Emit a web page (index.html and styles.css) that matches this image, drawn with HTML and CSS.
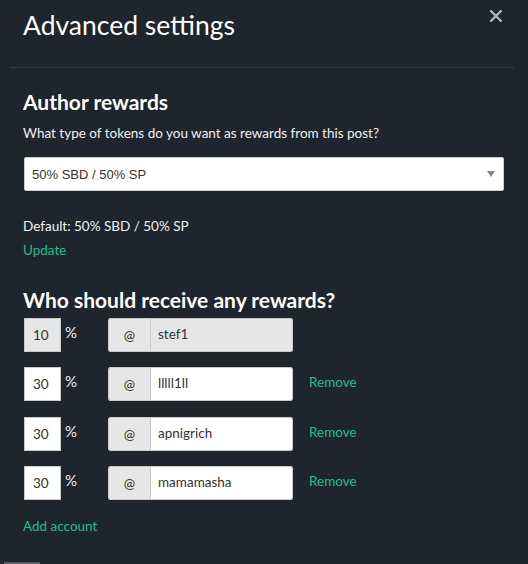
FILE: index.html
```html
<!DOCTYPE html>
<html>
<head>
<meta charset="utf-8">
<link rel="stylesheet" href="styles.css">
</head>
<body>
<div class="modal">
  <div class="header">
    <h1 class="title">Advanced settings</h1>
    <svg class="close" width="12" height="12" viewBox="0 0 12 12"><path d="M1 1 L11 11 M11 1 L1 11" stroke="#a9b1b9" stroke-width="2.4" stroke-linecap="square"/></svg>
  </div>
  <div class="divider"></div>
  <div class="content">
    <h2 class="section-title">Author rewards</h2>
    <p class="desc">What type of tokens do you want as rewards from this post?</p>
    <div class="select">
      <span class="select-text">50% SBD / 50% SP</span>
      <span class="arrow"></span>
    </div>
    <p class="default">Default: 50% SBD / 50% SP</p>
    <a class="link update">Update</a>
    <h2 class="section-title second">Who should receive any rewards?</h2>
    <div class="rows">
      <div class="row">
        <div class="pct-cell"><span class="pct-input disabled">10</span><span class="pct-sign">%</span></div>
        <div class="account"><span class="at">@</span><span class="name disabled">stef1</span></div>
      </div>
      <div class="row">
        <div class="pct-cell"><span class="pct-input">30</span><span class="pct-sign">%</span></div>
        <div class="account"><span class="at">@</span><span class="name">lllll1ll</span></div>
        <a class="link remove">Remove</a>
      </div>
      <div class="row">
        <div class="pct-cell"><span class="pct-input">30</span><span class="pct-sign">%</span></div>
        <div class="account"><span class="at">@</span><span class="name">apnigrich</span></div>
        <a class="link remove">Remove</a>
      </div>
      <div class="row">
        <div class="pct-cell"><span class="pct-input">30</span><span class="pct-sign">%</span></div>
        <div class="account"><span class="at">@</span><span class="name">mamamasha</span></div>
        <a class="link remove">Remove</a>
      </div>
    </div>
    <a class="link add">Add account</a>
  </div>
  <div class="scrollbar"></div>
</div>
</body>
</html>
```
FILE: styles.css
```css
html, body {
  margin: 0;
  padding: 0;
  background: #1e252d;
}
body {
  width: 528px;
  height: 564px;
  overflow: hidden;
  font-family: Lato, "Noto Sans", sans-serif;
  color: #f0f0f0;
}
.modal {
  position: relative;
  height: 564px;
}
.header {
  position: relative;
  height: 67px;
}
.title {
  margin: 0;
  padding: 7px 0 0 23px;
  font-size: 26.5px;
  font-weight: 400;
  line-height: 36px;
  color: #ffffff;
}
.close {
  position: absolute;
  top: 10px;
  right: 26px;
}
.divider {
  height: 1px;
  margin: 0 14px 0 10px;
  background: #323d48;
}
.content {
  padding: 0 24px 0 23px;
}
.section-title {
  margin: 0;
  font-size: 21px;
  font-weight: 700;
  line-height: 26px;
  color: #ffffff;
  padding-top: 21px;
}
.section-title.second {
  padding-top: 28px;
}
.desc {
  margin: 9px 0 0;
  font-size: 13.5px;
  line-height: 18px;
}
.select {
  margin: 15px 0 0 1px;
  height: 32px;
  background: #fff;
  border: 1px solid #cfcfcf;
  border-radius: 2px;
  display: flex;
  align-items: center;
  justify-content: space-between;
  padding: 0 8px 0 7px;
  box-sizing: content-box;
  width: 463px;
}
.select-text {
  font-family: "Liberation Sans", Arial, sans-serif;
  font-size: 13px;
  color: #333;
}
.arrow {
  width: 0;
  height: 0;
  border-left: 4px solid transparent;
  border-right: 4px solid transparent;
  border-top: 6px solid #888;
}
.default {
  margin: 26px 0 0;
  font-size: 13.5px;
  line-height: 18px;
}
.link {
  color: #1fbf8f;
  font-size: 13.5px;
  line-height: 18px;
}
.update {
  display: block;
  margin-top: 6px;
}
.rows {
  margin-top: 5px;
  display: flex;
  flex-direction: column;
  gap: 15.3px;
}
.row {
  display: flex;
  align-items: center;
  height: 34px;
}
.pct-cell {
  width: 84px;
  display: flex;
  align-items: flex-start;
  height: 34px;
  padding-left: 1px;
}
.pct-input {
  box-sizing: border-box;
  width: 37px;
  height: 34px;
  background: #fff;
  border: 1px solid #cacaca;
  font-size: 13.5px;
  color: #333;
  padding-left: 8px;
  line-height: 32px;
}
.pct-sign {
  margin-left: 4px;
  font-size: 15px;
  line-height: 28px;
}
.disabled {
  background: #e6e6e6;
}
.account {
  display: flex;
  height: 34px;
  width: 185px;
  box-sizing: border-box;
  border: 1px solid #cacaca;
  border-radius: 2px;
  overflow: hidden;
}
.at {
  width: 41px;
  background: #e6e6e6;
  border-right: 1px solid #cacaca;
  color: #333;
  font-size: 13.5px;
  text-align: center;
  line-height: 32px;
}
.name {
  flex: 1;
  background: #fff;
  color: #333;
  font-size: 13.5px;
  line-height: 30px;
  padding-left: 7px;
}
.name.disabled {
  background: #e6e6e6;
}
.remove {
  margin-left: 16px;
  margin-top: -4px;
}
.add {
  display: block;
  margin-top: 17px;
}
.scrollbar {
  position: absolute;
  left: 4px;
  bottom: 0;
  width: 36px;
  height: 2px;
  background: #5b5f63;
}
```
